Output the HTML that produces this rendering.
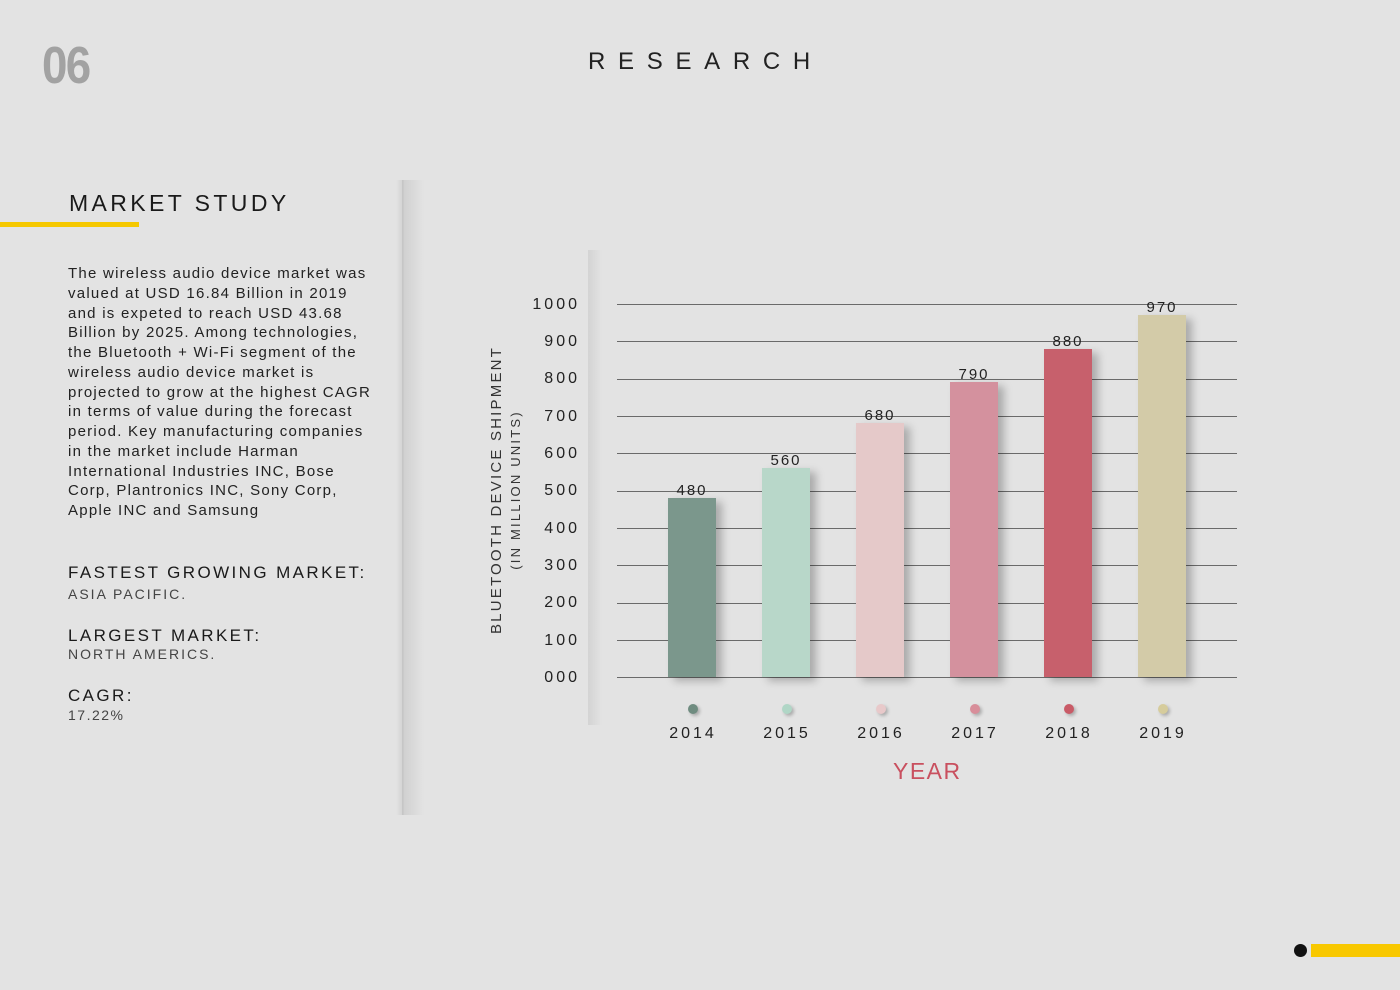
<!DOCTYPE html>
<html><head><meta charset="utf-8"><style>
body{margin:0;width:1400px;height:990px;background:#e3e3e3;font-family:"Liberation Sans",sans-serif;position:relative;overflow:hidden;color:#1a1a1a}
.a{position:absolute;white-space:nowrap}
.grid{position:absolute;left:617px;width:620px;height:1px;background:#6a6a6a}
.yl{position:absolute;left:520px;width:60px;text-align:right;font-size:16px;letter-spacing:3px;color:#222}
.bar{position:absolute;width:48px;bottom:313px;box-shadow:6px 4px 8px rgba(0,0,0,.25)}
.val{position:absolute;width:60px;text-align:center;font-size:15px;letter-spacing:2px;color:#222}
.dot{position:absolute;width:10px;height:10px;border-radius:50%;top:704px;box-shadow:2px 2px 3px rgba(0,0,0,.25)}
.yr{position:absolute;top:725px;width:80px;text-align:center;font-size:16px;letter-spacing:3px;color:#222}
</style></head><body>
<div class="a" style="left:42px;top:36px;font-size:52px;font-weight:bold;color:#a2a2a2;letter-spacing:-2px;transform:scaleX(0.88);transform-origin:left">06</div>
<div class="a" style="left:588px;top:48px;font-size:24px;letter-spacing:12.7px;color:#222">RESEARCH</div>

<div style="position:absolute;left:396px;top:180px;width:8px;height:635px;background:linear-gradient(90deg,rgba(0,0,0,0),rgba(0,0,0,.06) 70%,rgba(0,0,0,.02));"></div>
<div style="position:absolute;left:402px;top:180px;width:22px;height:635px;background:linear-gradient(90deg,rgba(0,0,0,.09),rgba(0,0,0,0))"></div>
<div style="position:absolute;left:588px;top:250px;width:14px;height:475px;background:linear-gradient(90deg,rgba(0,0,0,.07),rgba(0,0,0,0))"></div>

<div class="a" style="left:69px;top:190px;font-size:23px;letter-spacing:3.4px;color:#1a1a1a">MARKET STUDY</div>
<div style="position:absolute;left:0;top:222px;width:139px;height:5px;background:#f5c800"></div>

<div class="a" style="left:68px;top:264px;font-size:15px;line-height:19.75px;letter-spacing:1.25px;color:#222">The wireless audio device market was<br>valued at USD 16.84 Billion in 2019<br>and is expeted to reach USD 43.68<br>Billion by 2025. Among technologies,<br>the Bluetooth + Wi-Fi segment of the<br>wireless audio device market is<br>projected to grow at the highest CAGR<br>in terms of value during the forecast<br>period. Key manufacturing companies<br>in the market include Harman<br>International Industries INC, Bose<br>Corp, Plantronics INC, Sony Corp,<br>Apple INC and Samsung</div>

<div class="a" style="left:68px;top:563px;font-size:17px;letter-spacing:2.4px">FASTEST GROWING MARKET:</div>
<div class="a" style="left:68px;top:586px;font-size:14px;letter-spacing:2px;color:#444">ASIA PACIFIC.</div>
<div class="a" style="left:68px;top:626px;font-size:17px;letter-spacing:2.4px">LARGEST MARKET:</div>
<div class="a" style="left:68px;top:646px;font-size:14px;letter-spacing:2px;color:#444">NORTH AMERICS.</div>
<div class="a" style="left:68px;top:686px;font-size:17px;letter-spacing:2.4px">CAGR:</div>
<div class="a" style="left:68px;top:707px;font-size:14px;letter-spacing:1.5px;color:#444">17.22%</div>

<div class="a" style="left:506px;top:490px;transform:translate(-50%,-50%) rotate(-90deg);font-size:15px;letter-spacing:2.2px;color:#333;text-align:center;line-height:19px">BLUETOOTH DEVICE SHIPMENT<br><span style="font-size:13px">(IN MILLION UNITS)</span></div>

<div class="grid" style="top:304px"></div><div class="grid" style="top:341px"></div><div class="grid" style="top:379px"></div><div class="grid" style="top:416px"></div><div class="grid" style="top:453px"></div><div class="grid" style="top:491px"></div><div class="grid" style="top:528px"></div><div class="grid" style="top:565px"></div><div class="grid" style="top:603px"></div><div class="grid" style="top:640px"></div><div class="grid" style="top:677px"></div>
<div class="yl" style="top:296px">1000</div><div class="yl" style="top:333px">900</div><div class="yl" style="top:370px">800</div><div class="yl" style="top:408px">700</div><div class="yl" style="top:445px">600</div><div class="yl" style="top:482px">500</div><div class="yl" style="top:520px">400</div><div class="yl" style="top:557px">300</div><div class="yl" style="top:594px">200</div><div class="yl" style="top:632px">100</div><div class="yl" style="top:669px">000</div>

<div class="bar" style="left:668px;height:179px;background:#7b978c"></div>
<div class="bar" style="left:762px;height:209px;background:#b8d7c9"></div>
<div class="bar" style="left:856px;height:254px;background:#e5c9c9"></div>
<div class="bar" style="left:950px;height:295px;background:#d4919e"></div>
<div class="bar" style="left:1044px;height:328px;background:#c7606c"></div>
<div class="bar" style="left:1138px;height:362px;background:#d3cba8"></div>
<div class="val" style="left:662px;top:482px">480</div>
<div class="val" style="left:756px;top:452px">560</div>
<div class="val" style="left:850px;top:407px">680</div>
<div class="val" style="left:944px;top:366px">790</div>
<div class="val" style="left:1038px;top:333px">880</div>
<div class="val" style="left:1132px;top:299px">970</div>

<div class="dot" style="left:688px;background:#6f8c80"></div>
<div class="dot" style="left:782px;background:#b0d6c6"></div>
<div class="dot" style="left:876px;background:#e8c9ca"></div>
<div class="dot" style="left:970px;background:#d88e9a"></div>
<div class="dot" style="left:1064px;background:#c95b67"></div>
<div class="dot" style="left:1158px;background:#d6cc9c"></div>
<div class="yr" style="left:653px">2014</div><div class="yr" style="left:747px">2015</div><div class="yr" style="left:841px">2016</div><div class="yr" style="left:935px">2017</div><div class="yr" style="left:1029px">2018</div><div class="yr" style="left:1123px">2019</div>
<div class="a" style="left:893px;top:758px;font-size:23px;letter-spacing:1.5px;color:#c9505f">YEAR</div>

<div style="position:absolute;left:1294px;top:944px;width:13px;height:13px;border-radius:50%;background:#111"></div>
<div style="position:absolute;left:1311px;top:944px;width:89px;height:13px;background:#f8c800"></div>
</body></html>
